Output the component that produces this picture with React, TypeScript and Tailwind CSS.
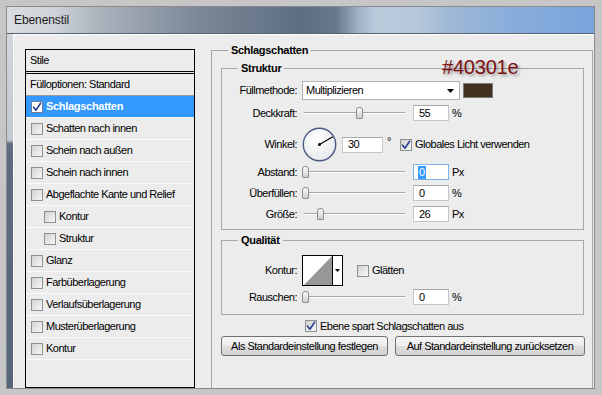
import React from "react";

type CBProps = { checked?: boolean; white?: boolean };
function CheckBox({ checked, white }: CBProps) {
  return (
    <span
      className={
        white
          ? "flex h-[12px] w-[12px] shrink-0 items-center justify-center border border-[#6d7a9c] bg-white"
          : "flex h-[12px] w-[12px] shrink-0 items-center justify-center border border-[#8e8f8f] bg-[linear-gradient(135deg,#d2d2d2,#f7f7f7)]"
      }
    >
      {checked && (
        <svg width="10" height="10" viewBox="0 0 10 10">
          <path d="M1.6 5.2 L3.9 8.2 L8.6 1.2" stroke="#2a3f96" strokeWidth="1.6" fill="none" strokeLinecap="round" strokeLinejoin="round" />
        </svg>
      )}
    </span>
  );
}

function Slider({ pos }: { pos: number }) {
  return (
    <div className="relative ml-[5px] h-[16px] w-[103px] shrink-0">
      <div className="absolute left-[2px] right-0 top-[7px] h-[2px] border-b border-t border-b-white border-t-[#a6a6a6]" />
      <div
        className="absolute top-[2px] h-[12px] w-[7px] rounded-b-[1px] rounded-t-[3px] border border-[#8d8d8d] bg-[linear-gradient(#fbfbfb,#cfcfcf)]"
        style={{ left: pos }}
      />
    </div>
  );
}

function Field({ value, unit }: { value: string; unit: string }) {
  return (
    <>
      <div className="ml-[8px] flex h-[16px] w-[36px] shrink-0 items-center border border-[#c6c6c6] border-t-[#a8a8a8] bg-white pl-[5px]">
        {value}
      </div>
      <span className="ml-[3px]">{unit}</span>
    </>
  );
}

function Label({ children }: { children: React.ReactNode }) {
  return <span className="w-[75px] shrink-0 text-right">{children}</span>;
}

function Row({ label, checked, indent, selected }: { label: string; checked?: boolean; indent?: boolean; selected?: boolean }) {
  return (
    <div
      className={`flex h-[22px] items-center border-b ${selected ? "border-b-[#f4f4f4] bg-[#3399ff] font-bold tracking-[-0.3px] text-white" : "border-b-[#fbfbfb]"} ${indent ? "pl-[18px]" : "pl-[5px]"}`}
    >
      <CheckBox checked={checked} white={selected} />
      <span className="ml-[3px]">{label}</span>
    </div>
  );
}

export default function App() {
  return (
    <div className="relative h-[395px] w-[602px] overflow-hidden bg-[#c6c6c6] pb-[6px] pl-[6px] pr-[7px] pt-[6px] text-[11px] leading-[13px] tracking-[-0.5px] text-black [font-family:'Liberation_Sans',Arial,sans-serif]">
      <div className="flex h-full flex-col border border-[#8a8a8a]">
        {/* title bar */}
        <div className="flex h-[27px] shrink-0 items-center border-b border-b-[#56626f] bg-[linear-gradient(90deg,#dadde1_0%,#ced3d9_8%,#aab2bc_16%,#7a8797_33%,#5e6e82_50%,#66778b_56%,#a3b3c6_60%,#bccbdc_63%,#b6c7da_70%,#a1b9d5_75%,#8aaedb_85%,#7aa5dc_100%)] pl-[7px] text-[12px] tracking-[-0.1px] text-[#1b1b1b]">
          Ebenenstil
        </div>
        <div className="flex min-h-0 flex-1">
          <div className="w-[6px] shrink-0 bg-[linear-gradient(180deg,#d3d7dc_0%,#c2c8cf_30%,#5e6d80_31%,#55657a_100%)]" />
          <div className="flex min-w-0 flex-1 border-l border-t border-white bg-[#ececec]">
            {/* left styles panel */}
            <div className="ml-[11px] mt-[14px] flex w-[170px] shrink-0 flex-col border border-black">
              <div className="flex h-[22px] items-center border-b border-black pl-[4px]">Stile</div>
              <div className="mt-[1px] flex flex-1 flex-col border-t border-black">
                <div className="flex h-[22px] items-center border-b border-b-[#9c9c9c] pl-[4px]">Fülloptionen: Standard</div>
                <Row label="Schlagschatten" checked selected />
                <Row label="Schatten nach innen" />
                <Row label="Schein nach außen" />
                <Row label="Schein nach innen" />
                <Row label="Abgeflachte Kante und Relief" />
                <Row label="Kontur" indent />
                <Row label="Struktur" indent />
                <Row label="Glanz" />
                <Row label="Farbüberlagerung" />
                <Row label="Verlaufsüberlagerung" />
                <Row label="Musterüberlagerung" />
                <Row label="Kontur" />
              </div>
            </div>

            {/* right: Schlagschatten group */}
            <div className="ml-[16px] mt-[15px] flex w-[382px] shrink-0 flex-col border border-b-0 border-[#a7a7a7]">
              <span className="-mt-[8px] ml-[16px] w-fit bg-[#ececec] px-[3px] font-bold leading-[14px] tracking-[-0.3px]">Schlagschatten</span>

              {/* Struktur */}
              <div className="ml-[9px] mt-[11px] flex w-[363px] flex-col border border-[#a7a7a7] pb-[7px]">
                <span className="-mt-[8px] ml-[16px] w-fit bg-[#ececec] px-[3px] font-bold leading-[14px] tracking-[-0.3px]">Struktur</span>
                <div className="mt-[6px] flex h-[19px] items-center">
                  <Label>Füllmethode:</Label>
                  <div className="ml-[5px] flex h-[19px] w-[158px] items-center justify-between border border-[#b4b4b4] bg-white pl-[3px] pr-[5px]">
                    <span>Multiplizieren</span>
                    <svg width="7" height="4" viewBox="0 0 7 4"><polygon points="0,0 7,0 3.5,4" fill="#000" /></svg>
                  </div>
                  <div className="ml-[3px] h-[15px] w-[30px] border border-[#7a7a7a] bg-[#40301e]" />
                </div>
                <div className="mt-[5px] flex h-[16px] items-center">
                  <Label>Deckkraft:</Label>
                  <Slider pos={54} />
                  <Field value="55" unit="%" />
                </div>
                <div className="mt-[6px] flex h-[35px] items-center">
                  <Label>Winkel:</Label>
                  <svg className="ml-[5px] shrink-0" width="35" height="35" viewBox="0 0 35 35">
                    <defs>
                      <radialGradient id="dial" cx="40%" cy="35%" r="70%">
                        <stop offset="0%" stopColor="#ffffff" />
                        <stop offset="100%" stopColor="#e6e8ec" />
                      </radialGradient>
                    </defs>
                    <circle cx="17.5" cy="17.5" r="16.2" fill="url(#dial)" stroke="#4a5a80" strokeWidth="1.4" />
                    <line x1="17.5" y1="17.5" x2="30.8" y2="9.8" stroke="#000" strokeWidth="1.1" />
                    <circle cx="17.5" cy="17.5" r="1.5" fill="#000" />
                  </svg>
                  <div className="ml-[5px] flex h-[16px] w-[41px] shrink-0 items-center border border-[#c6c6c6] border-t-[#a8a8a8] bg-white pl-[5px]">30</div>
                  <span className="ml-[4px] -mt-[6px]">°</span>
                  <span className="ml-[9px]"><CheckBox checked /></span>
                  <span className="ml-[3px]">Globales Licht verwenden</span>
                </div>
                <div className="mt-[2px] flex h-[16px] items-center">
                  <Label>Abstand:</Label>
                  <Slider pos={0} />
                  <div className="ml-[8px] flex h-[16px] w-[36px] shrink-0 items-center border border-[#7eb4ea] bg-white pl-[4px]">
                    <span className="bg-[#3399ff] px-[1px] text-white">0</span>
                  </div>
                  <span className="ml-[3px]">Px</span>
                </div>
                <div className="mt-[5px] flex h-[16px] items-center">
                  <Label>Überfüllen:</Label>
                  <Slider pos={0} />
                  <Field value="0" unit="%" />
                </div>
                <div className="mt-[5px] flex h-[16px] items-center">
                  <Label>Größe:</Label>
                  <Slider pos={15} />
                  <Field value="26" unit="Px" />
                </div>
              </div>

              {/* Qualität */}
              <div className="ml-[9px] mt-[10px] flex w-[363px] flex-col border border-[#a7a7a7] pb-[9px]">
                <span className="-mt-[8px] ml-[16px] w-fit bg-[#ececec] px-[3px] font-bold leading-[14px] tracking-[-0.3px]">Qualität</span>
                <div className="mt-[8px] flex h-[31px] items-center">
                  <Label>Kontur:</Label>
                  <div className="ml-[5px] flex h-[31px] w-[41px] shrink-0 border border-black bg-white">
                    <svg width="29" height="29" viewBox="0 0 29 29">
                      <polygon points="1,29 29,0 29,29" fill="#979797" />
                    </svg>
                    <div className="flex w-[10px] items-center justify-center border-l border-black">
                      <svg width="5" height="3" viewBox="0 0 5 3"><polygon points="0,0 5,0 2.5,3" fill="#000" /></svg>
                    </div>
                  </div>
                  <span className="ml-[14px]"><CheckBox /></span>
                  <span className="ml-[3px]">Glätten</span>
                </div>
                <div className="mt-[3px] flex h-[16px] items-center">
                  <Label>Rauschen:</Label>
                  <Slider pos={0} />
                  <Field value="0" unit="%" />
                </div>
              </div>

              <div className="mt-[5px] flex h-[12px] items-center pl-[93px]">
                <CheckBox checked />
                <span className="ml-[3px]">Ebene spart Schlagschatten aus</span>
              </div>
              <div className="ml-[9px] mt-[4px] flex gap-[7px]">
                <button className="h-[20px] w-[167px] rounded-[3px] border border-[#707070] bg-[linear-gradient(#f6f6f6,#ececec_50%,#dfdfdf_50%,#d2d2d2)] text-[11px] tracking-[-0.5px]">
                  Als Standardeinstellung festlegen
                </button>
                <button className="h-[20px] w-[190px] rounded-[3px] border border-[#707070] bg-[linear-gradient(#f6f6f6,#ececec_50%,#dfdfdf_50%,#d2d2d2)] text-[11px] tracking-[-0.5px]">
                  Auf Standardeinstellung zurücksetzen
                </button>
              </div>
            </div>
          </div>
        </div>
      </div>

      {/* annotation */}
      <div className="absolute left-[442px] top-[57px] text-[20px] leading-[20px] tracking-[-0.2px] text-[#7c1212] [font-family:'Liberation_Sans',Arial,sans-serif] [text-shadow:2px_2px_3px_rgba(0,0,0,0.35)]">
        #40301e
      </div>
    </div>
  );
}
